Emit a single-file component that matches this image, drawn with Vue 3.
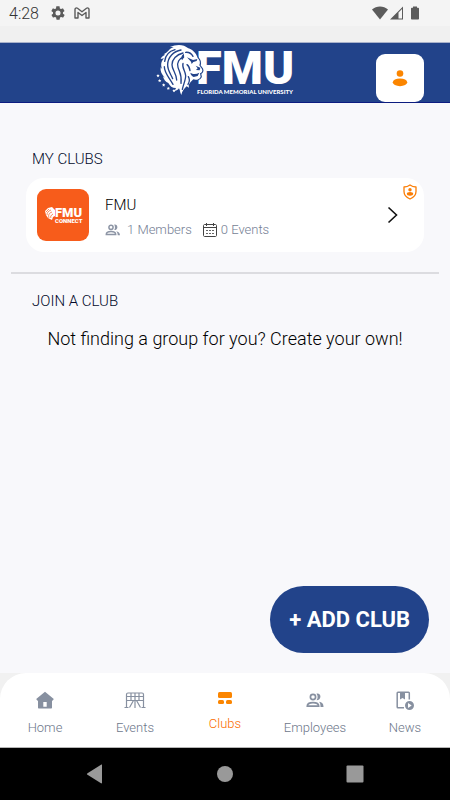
<script setup>
import { ref } from 'vue';

const activeTab = ref('Clubs');

const tabs = ['Home', 'Events', 'Clubs', 'Employees', 'News'];

const clubs = [
  { id: 1, name: 'FMU', members: 1, events: 0 },
];
</script>

<template>
  <div class="screen">
    <!-- status bar -->
    <div class="status-bar">
      <span class="status-time">4:28</span>
      <svg class="status-gear" viewBox="0 0 24 24" width="16" height="16" aria-hidden="true">
        <path fill="#5b5b5b" d="M19.4 13c0-.3.1-.7.1-1s0-.7-.1-1l2.1-1.600c.2-.2.2-.4.1-.7l-2-3.400c-.1-.2-.4-.3-.6-.2l-2.500 1c-.5-.4-1.100-.7-1.700-1l-.4-2.600c0-.3-.2-.5-.5-.5h-4c-.2 0-.5.2-.5.400l-.4 2.700c-.6.2-1.100.6-1.700 1l-2.500-1c-.2-.1-.5 0-.6.2l-2 3.400c-.1.200-.1.500.1.700L4.600 11c-.1.300-.1.700-.1 1s0 .7.100 1l-2.100 1.600c-.2.200-.2.400-.1.700l2 3.400c.1.200.4.300.6.200l2.500-1c.5.400 1.100.7 1.700 1l.4 2.600c0 .3.3.5.5.5h4c.3 0 .5-.2.500-.5l.4-2.600c.6-.3 1.200-.6 1.700-1l2.500 1c.2.100.5 0 .6-.2l2-3.400c.1-.200.1-.5-.1-.7zM12 15.800a3.800 3.800 0 1 1 0-7.600 3.800 3.800 0 0 1 0 7.600z" />
      </svg>
      <svg viewBox="0 0 16 12" width="16" height="12" aria-hidden="true">
        <path fill="none" stroke="#5b5b5b" stroke-width="1.4" stroke-linejoin="round" d="M1 2.500V11h3V5.500l4 3 4-3V11h3V2.500C15 1 13.500.5 12.500 1.300L8 4.800 3.500 1.300C2.500.5 1 1 1 2.500z" />
      </svg>
      <span class="status-space"></span>
      <svg viewBox="0 0 48 14" width="48" height="14" aria-hidden="true">
        <path fill="#5b5b5b" d="M0 3.500C4.500-.5 11.500-.5 16 3.500L8 13.500z" />
        <path fill="#5b5b5b" fill-rule="evenodd" d="M18 13.500 31 .5v13zM26.500 12.500H30V3L26.500 6.500z" />
        <path fill="#5b5b5b" d="M41 .5h4v1.300h1.200c.5 0 .8.3.8.8v10.100c0 .5-.3.800-.8.800h-6.400c-.5 0-.8-.3-.8-.8V2.600c0-.5.3-.8.800-.8H41z" />
      </svg>
    </div>

    <header class="header">
      <svg class="logo" viewBox="0 0 142 59" width="142" height="59" role="img" aria-label="Florida Memorial University">
        <text class="logo-name" x="42" y="41">FMU</text>
        <text class="logo-sub" x="43" y="51">FLORIDA MEMORIAL UNIVERSITY</text>
        <g transform="translate(1 -1) scale(.3333)">
          <path fill="#fff" stroke="#22438a" stroke-width="7" paint-order="stroke" d="M26 37C38 32 42 20 56 15L45 15C64 6 86 6 100 19C112 22 124 34 128 48C134 54 137 61 133 70L141 81C144 87 140 92 135 94L137 104C133 113 123 115 115 112C110 117 105 121 101 129L102 137L95 133C88 140 81 147 79 159C75 153 76 146 72 139C69 143 65 146 59 146L63 138C51 138 45 132 40 123C32 121 26 113 24 103L30 107C20 98 15 87 17 76L22 82C16 70 18 58 27 49L17 51C18 45 25 41 31 38z" />
          <g fill="none" stroke="#22438a" stroke-width="4" stroke-linecap="round" stroke-linejoin="round">
            <path d="M60 23C42 28 31 40 29 58M78 24C55 28 39 46 38 67C37 85 47 95 53 110M84 33C64 38 51 52 51 68C51 84 64 92 65 114M86 45C72 50 65 62 69 76C73 90 81 96 78 124M28 74C28 92 41 104 54 127M84 64C80 77 91 87 92 101C92 113 86 125 82 142M100 104C105 112 105 118 99 127" />
            <path d="M92 31C101 30 110 36 114 43M96 68C102 72 104 79 105 86" />
          </g>
          <g fill="#22438a">
            <path d="M96 46 114 54 127 51 125 57 115 60 110 66 108 59z" />
            <path d="M122 71 136 77 134 85 123 84 128 79z" />
            <path d="M106 92C114 98 124 97 133 92L128 102 116 105C110 102 107 98 106 92z" />
            <path d="M86 35C79 40 77 48 81 55C84 50 90 45 86 35z" />
          </g>
          <g fill="#fff">
            <path id="lion-star" d="m9 96 1.500 3 3.500.5-2.500 2.500.5 3.500-3-1.700-3 1.700.5-3.500L4 99.500l3.500-.5z" />
            <use href="#lion-star" x="5" y="15" />
            <use href="#lion-star" x="17" y="28" />
            <use href="#lion-star" x="31" y="38" />
            <use href="#lion-star" x="48" y="45" />
          </g>
        </g>
      </svg>
      <button class="profile" type="button" aria-label="Profile">
        <svg viewBox="0 0 16 18" width="16" height="18" aria-hidden="true">
          <circle cx="8" cy="4.500" r="3.300" fill="#fb8500" />
          <ellipse cx="8" cy="13.300" rx="7.200" ry="3.900" fill="#fb8500" />
        </svg>
      </button>
    </header>

    <main class="content">
      <section class="my-clubs">
        <h2 class="section-title">MY CLUBS</h2>
        <a v-for="club in clubs" :key="club.id" class="club-card" href="#">
          <svg class="club-logo" viewBox="0 0 52 52" width="52" height="52" aria-hidden="true">
            <rect width="52" height="52" rx="9" fill="#f75c1b" />
            <text class="club-logo-name" x="18" y="28">FMU</text>
            <text class="club-logo-sub" x="18" y="34">CONNECT</text>
            <path fill="#fff" d="m8 22 3-3 4-1 3 3v6l-2 1-1 3-4-2-2-3z" />
            <path fill="none" stroke="#f75c1b" stroke-width=".7" d="m9 23 3-3m-2 6c0-2 1-4 4-5m-2 8c-1-3 0-5 3-6m-1 6c-1-1 0-3 2-4" />
          </svg>
          <div class="club-info">
            <div class="club-name">{{ club.name }}</div>
            <div class="club-meta">
              <svg viewBox="0 0 16 12" width="16" height="12" aria-hidden="true">
                <g fill="none" stroke="#8d95a5" stroke-width="1.500">
                  <circle cx="6" cy="3.300" r="2.100" />
                  <path d="M1.300 10.500c0-2.100 2.300-3 4.700-3s4.700.9 4.700 3z" />
                </g>
                <path fill="#8d95a5" d="M9.200.5c4-.8 4.500 5.600 0 5.600 1-1.500 1-3.900 0-5.600zM11.200 7.200c2.200.3 3.800 1.500 3.800 4.100h-2.300c0-2-.5-3.200-1.500-4.100z" />
              </svg>
              <span class="members">{{ club.members }} Members</span>
              <svg viewBox="0 0 14 14" width="14" height="14" aria-hidden="true">
                <path fill="none" stroke="#444" d="M.5 2.500C.5 2 1 1.500 1.500 1.500h11c.5 0 1 .5 1 1v10c0 .5-.5 1-1 1h-11c-.5 0-1-.5-1-1zM.5 4.500h13M3.500 0v3M10.500 0v3" />
                <path stroke="#666" stroke-dasharray="2 1" d="M3 7.500h8M3 10.500h8" />
              </svg>
              <span class="events">{{ club.events }} Events</span>
            </div>
          </div>
          <svg class="chevron" viewBox="0 0 12 18" width="12" height="18" aria-hidden="true">
            <path fill="none" stroke="#111" stroke-width="1.600" d="m1.500 1.500 8 7.500-8 7.500" />
          </svg>
          <svg class="shield" viewBox="0 0 14 16" width="14" height="16" aria-hidden="true">
            <path fill="none" stroke="#fb7d05" stroke-width="1.300" stroke-linejoin="round" d="M7 1c1.700 1.300 3.700 2 6 2v4.500c0 3.500-2.500 6-6 7.500-3.500-1.500-6-4-6-7.500V3c2.300 0 4.300-.7 6-2z" />
            <circle cx="7" cy="5.700" r="1.700" fill="#fb7d05" />
            <ellipse cx="7" cy="9.800" rx="3.200" ry="1.900" fill="#fb7d05" />
          </svg>
        </a>
      </section>

      <hr class="divider">

      <section class="join">
        <h2 class="section-title">JOIN A CLUB</h2>
        <p class="empty-text">Not finding a group for you? Create your own!</p>
      </section>

      <button class="add-club" type="button">+ ADD CLUB</button>
    </main>

    <div class="tab-wrap">
      <nav class="tab-bar">
        <button
          v-for="tab in tabs"
          :key="tab"
          class="tab"
          :class="{ active: activeTab === tab }"
          type="button"
          @click="activeTab = tab"
        >
          <svg v-if="tab === 'Home'" viewBox="0 0 20 20" width="20" height="20" aria-hidden="true">
            <path fill="currentColor" fill-rule="evenodd" d="M10 .8 18.800 8 17.600 9.700 17 9.400V16.500c0 .6-.4 1-1 1H4c-.6 0-1-.4-1-1V9.400L2.400 9.700 1.200 8zM8.300 11v4.700h3.400V11z" />
          </svg>
          <svg v-else-if="tab === 'Events'" viewBox="0 0 22 20" width="22" height="20" aria-hidden="true">
            <path fill="none" stroke="currentColor" stroke-width="1.200" d="M2.500 16.500V3.500c0-1 .5-1.500 1.500-1.500h14c1 0 1.500.5 1.500 1.500v13M.5 16.500h4M17.500 16.500h4M3 5.500h16M3 9.500h16M7 2v8M11 2v15M15 2v8M9.500 9.500l-4 7M12.500 9.500l4 7" />
          </svg>
          <svg v-else-if="tab === 'Clubs'" viewBox="0 0 16 14" width="16" height="14" aria-hidden="true">
            <rect x="1" y="1" width="14" height="6" rx="1.500" fill="currentColor" />
            <rect x="1" y="9" width="6" height="4" rx="1.500" fill="currentColor" />
            <rect x="9" y="9" width="6" height="4" rx="1.500" fill="currentColor" />
          </svg>
          <svg v-else-if="tab === 'Employees'" viewBox="0 0 20 20" width="20" height="20" aria-hidden="true">
            <g fill="none" stroke="currentColor" stroke-width="1.700">
              <circle cx="8" cy="6" r="2.600" />
              <path d="M2.300 15.100c0-2.600 2.700-3.400 5.700-3.400s5.700.8 5.700 3.400z" />
            </g>
            <path fill="currentColor" d="M11.500 2.700c5-1 5.500 6.600 0 6.600 1.500-2 1.500-4.600 0-6.600zM14 10.800c3 .5 4.500 2 4.500 5.200h-3c0-2.500-.3-4-1.500-5.200z" />
          </svg>
          <svg v-else viewBox="0 0 20 20" width="20" height="20" aria-hidden="true">
            <path fill="none" stroke="currentColor" stroke-width="1.500" d="M9 16.800H3c-.6 0-.8-.4-.8-.8V2c0-.5.3-.8.800-.8h10.500c.5 0 .8.300.8.8V8.500" />
            <path fill="currentColor" d="M5 1.500h5v7L7.500 7 5 8.500z" />
            <path fill="currentColor" fill-rule="evenodd" d="M14.500 10a4.500 4.500 0 1 1 0 9 4.500 4.500 0 0 1 0-9zM13 12v5l3.700-2.500z" />
          </svg>
          <span>{{ tab }}</span>
        </button>
      </nav>
    </div>

    <!-- system navigation -->
    <div class="system-nav">
      <button type="button" aria-label="Back">
        <svg viewBox="0 0 18 20" width="18" height="20" aria-hidden="true">
          <path fill="#999" d="M16 1v18c0 .5-.5.500-1 .3L1.500 10.800c-.8-.5-.8-1.100 0-1.600L15 .7c.5-.2 1-.2 1 .3z" />
        </svg>
      </button>
      <button type="button" aria-label="Home screen">
        <svg viewBox="0 0 18 18" width="18" height="18" aria-hidden="true">
          <circle cx="9" cy="9" r="8" fill="#999" />
        </svg>
      </button>
      <button type="button" aria-label="Recent apps">
        <svg viewBox="0 0 18 18" width="18" height="18" aria-hidden="true">
          <rect x=".5" y=".5" width="17" height="17" rx="1" fill="#999" />
        </svg>
      </button>
    </div>
  </div>
</template>

<style>
body {
  margin: 0;
}
</style>

<style scoped>
.screen {
  display: flex;
  flex-direction: column;
  min-height: 100vh;
  background: #f8f8fb;
  font-family: Roboto, "Noto Sans", sans-serif;
  font-weight: 300;
  color: #000;
}

button {
  border: none;
  background: none;
  padding: 0;
  font: inherit;
  cursor: pointer;
}

svg {
  display: block;
  flex: none;
}

/* ── status bar ── */

.status-bar {
  display: flex;
  align-items: center;
  height: 26px;
  padding: 0 30px 16px 9px;
  background: linear-gradient(#f4f4f4 26px, #f0f0f0 26px);
}

.status-time {
  font-size: 16px;
  color: #333;
}

.status-gear {
  margin: 0 8px 0 11px;
}

.status-space {
  flex: 1;
}

/* ── header ── */

.header {
  position: relative;
  display: flex;
  justify-content: center;
  height: 59px;
  background: #22438a;
  border-top: 1px solid #a9b2cb;
  border-bottom: 1px solid #0c1c80;
}

.logo {
  overflow: visible;
}

.logo-name {
  font-family: Roboto, sans-serif;
  font-size: 47px;
  font-weight: 900;
  fill: #fff;
}

.logo-sub {
  font-family: Lato, sans-serif;
  font-size: 6px;
  font-weight: 900;
  fill: #fff;
}

.profile {
  position: absolute;
  right: 26px;
  bottom: 0;
  display: flex;
  align-items: center;
  justify-content: center;
  width: 48px;
  height: 48px;
  border-radius: 9px;
  background: #fff;
}

/* ── content ── */

.content {
  flex: 1;
  display: flex;
  flex-direction: column;
}

.my-clubs {
  padding: 45px 26px 20px;
}

.section-title {
  margin: 0 0 8px;
  padding-left: 6px;
  font-size: 15px;
  line-height: 22px;
  font-weight: 300;
  color: #020a2a;
}

.club-card {
  position: relative;
  display: flex;
  align-items: center;
  padding: 11px 25px 11px 11px;
  border-radius: 18px;
  background: #fff;
  color: #000;
  text-decoration: none;
}

.club-logo-name {
  font-family: Roboto, sans-serif;
  font-size: 13px;
  font-weight: 900;
  fill: #fff;
}

.club-logo-sub {
  font-family: Roboto, sans-serif;
  font-size: 6px;
  font-weight: 900;
  fill: #fff;
}

.club-info {
  flex: 1;
  padding: 4px 0 0 16px;
}

.club-name {
  font-size: 15px;
  line-height: 20px;
}

.club-meta {
  display: flex;
  align-items: center;
  margin-top: 6px;
  font-size: 13px;
  line-height: 18px;
  color: #747e94;
}

.members {
  margin: 0 11px 0 6px;
}

.events {
  margin-left: 4px;
}

.shield {
  position: absolute;
  top: 6px;
  right: 7px;
}

.divider {
  width: calc(100% - 22px);
  height: 2px;
  margin: 0 auto;
  border: none;
  background: #dcdce0;
}

.join {
  padding: 16px 26px;
}

.empty-text {
  margin: 0;
  font-size: 18px;
  line-height: 24px;
  text-align: center;
  padding-top: 7px;
}

.add-club {
  align-self: flex-end;
  margin: auto 21px 20px 0;
  padding: 0 19px;
  height: 67px;
  border-radius: 34px;
  background: #22438a;
  color: #fff;
  font-size: 22px;
  font-weight: 700;
}

/* ── tab bar ── */

.tab-wrap {
  background: #f1f1f1;
}

.tab-bar {
  display: flex;
  height: 74px;
  border-radius: 26px 26px 0 0;
  border-bottom: 1px solid #b5b5b5;
  background: #fff;
}

.tab {
  flex: 1;
  display: flex;
  flex-direction: column;
  align-items: center;
  gap: 8px;
  padding-top: 18px;
  font-size: 13px;
  line-height: 18px;
  color: #6d778a;
}

.tab svg {
  color: #8790a0;
}

.tab.active {
  gap: 10px;
  color: #fb6d00;
}

.tab.active svg {
  color: #fb8500;
}

/* ── system navigation ── */

.system-nav {
  display: flex;
  align-items: center;
  justify-content: center;
  gap: 112px;
  height: 52px;
  background: #000;
}
</style>
